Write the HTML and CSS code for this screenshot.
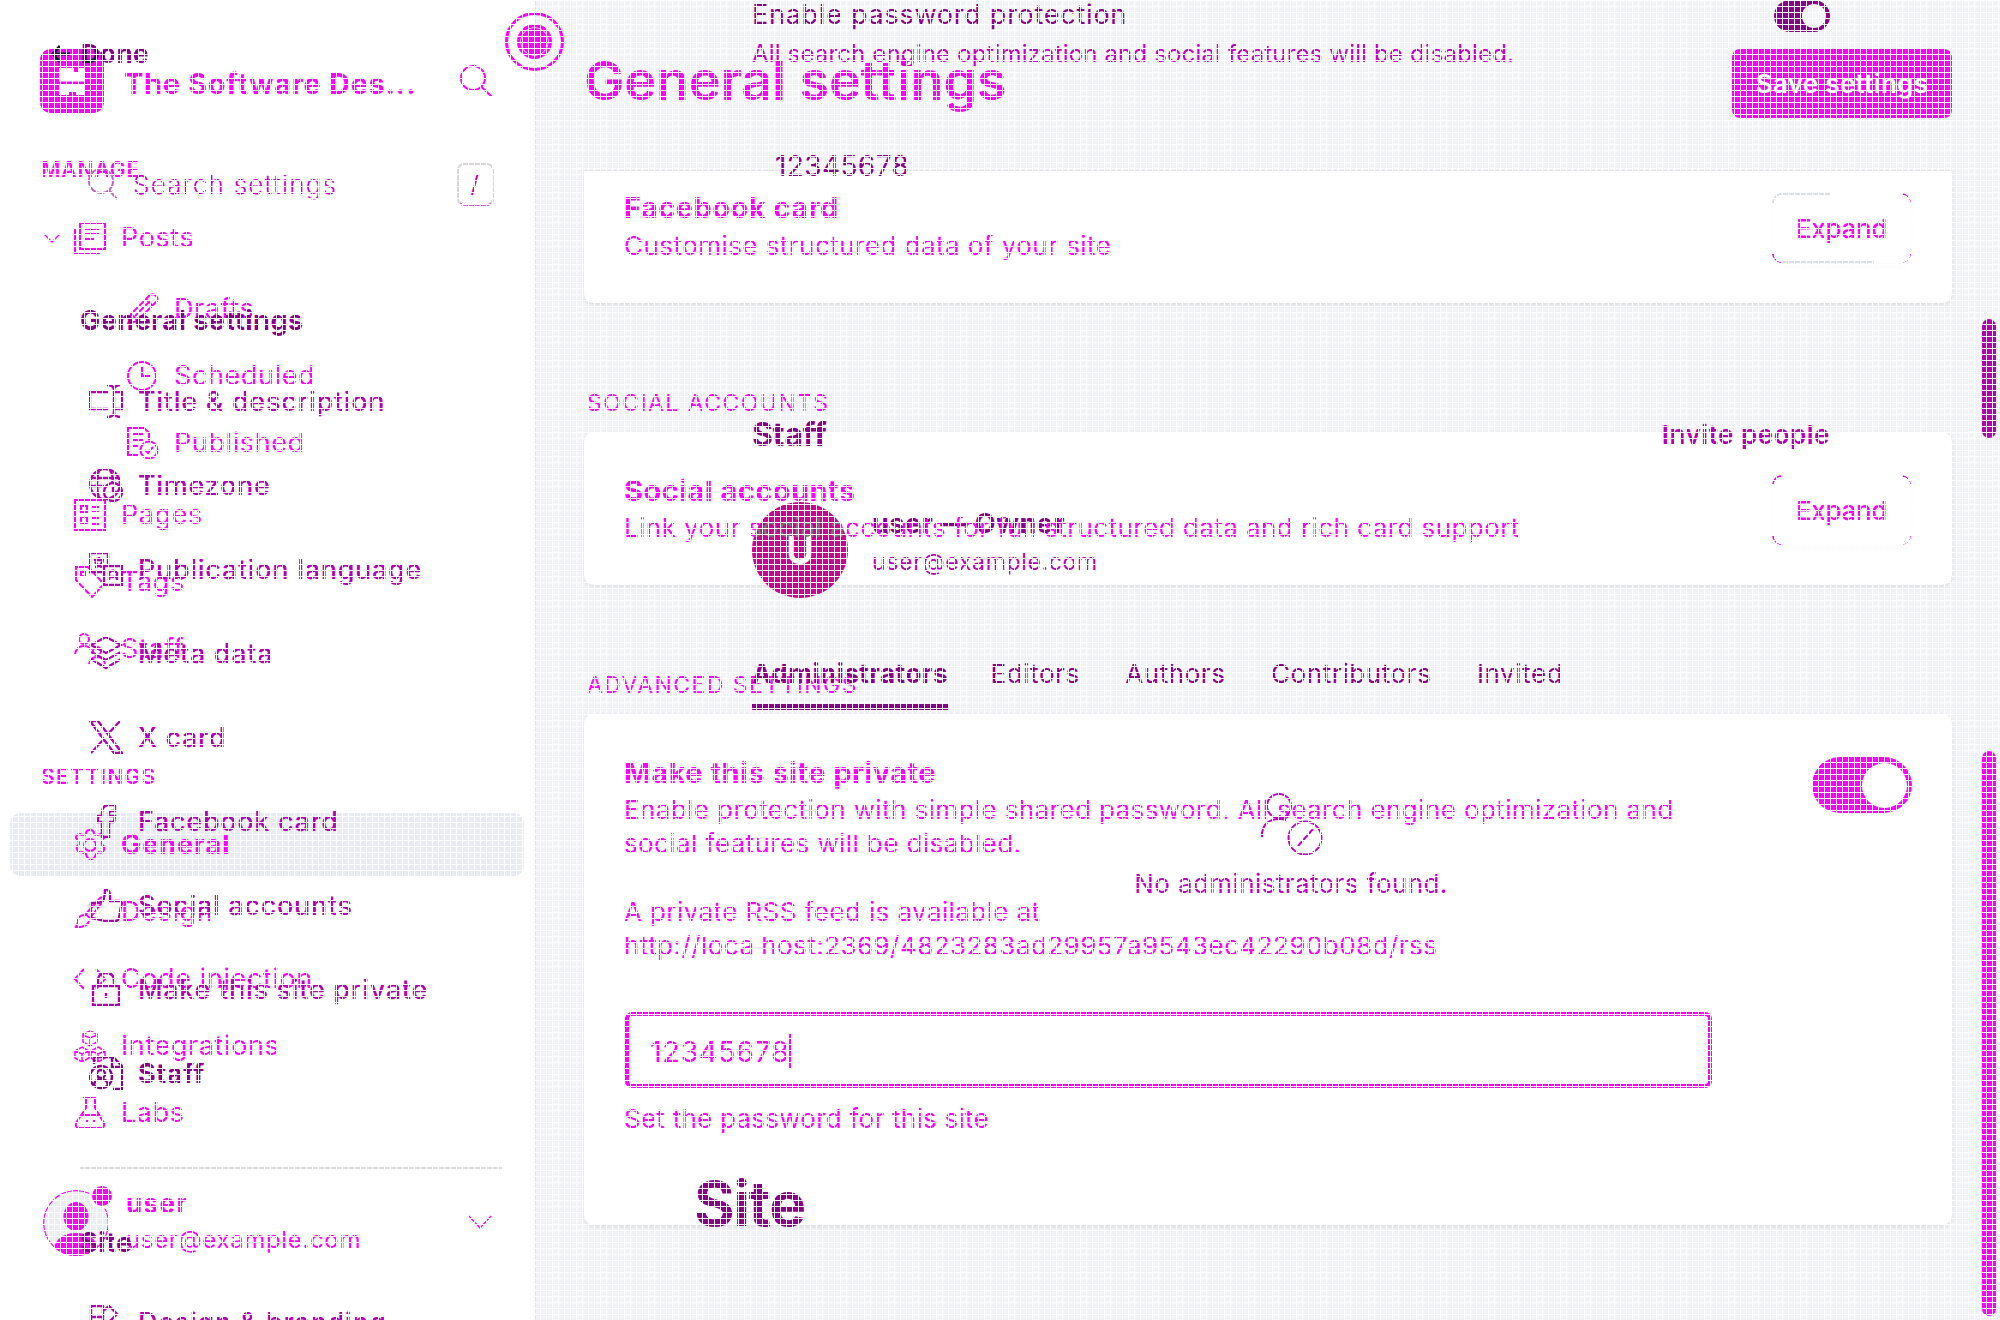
FILE: index.html
```
<!DOCTYPE html>
<html lang="en">
<head>
<meta charset="utf-8">
<title>General settings</title>
<link rel="stylesheet" href="styles.css">
</head>
<body>
<div class="admin">
  <aside class="side">
    <header class="brand">
      <svg class="logo" viewBox="0 0 64 64"><rect width="64" height="64" rx="11" fill="#f0f"/><path d="M19 19h15v4h5v-4h6v13.500H19zM19 36h26v10h-9v-3h-7v3H19z" fill="#fff"/></svg>
      <span class="brand-name">The Software Des...</span>
      <svg class="search" viewBox="0 0 32 32"><circle cx="13" cy="13" r="12"/><path d="M21.500 22l10 9.500"/></svg>
    </header>
    <h2 class="group">MANAGE</h2>
    <nav class="menu">
      <a class="row posts"><svg class="chev" viewBox="0 0 18 10"><path d="M1 1l8 8 8-8"/></svg><svg class="ic" viewBox="0 0 32 32"><path d="M6 1h25v26H6zM1 6v25h25M11 7h14M11 12h14M11 17h9"/></svg><span>Posts</span></a>
      <a class="row sub first"><svg class="ic" viewBox="0 0 32 32"><path d="M1 31l3-10L23 2q3-2 6 1t0 6L10 28zM4 21l7 7M19 6l7 7M8 23L24 7"/></svg><span>Drafts</span></a>
      <a class="row sub"><svg class="ic" viewBox="0 0 32 32"><circle cx="15" cy="16" r="14"/><path d="M15 6v10h8"/></svg><span>Scheduled</span></a>
      <a class="row sub"><svg class="ic" viewBox="0 0 32 32"><path d="M11 28H1V1h16l5 5v7M5 7h11M5 13h11M5 19h6"/><circle cx="22" cy="23" r="8.500"/><path d="M18 23l3 3 5-6"/></svg><span>Published</span></a>
      <a class="row pages"><svg class="ic" viewBox="0 0 32 32"><path d="M1 1h30v30H1zM7 7h6v6H7zM7 18h6v6H7zM18 8h7M18 12h7M18 19h7M18 25h7"/></svg><span>Pages</span></a>
      <a class="row"><svg class="ic" viewBox="0 0 32 32"><path d="M2 1h12l16 17-12 13L2 14zM7 6h4v4H7z"/></svg><span>Tags</span></a>
      <a class="row"><svg class="ic" viewBox="0 0 32 32"><circle cx="10" cy="6" r="5"/><path d="M1 22q1-9 9-9 5 0 7 4"/><circle cx="23" cy="18" r="4"/><path d="M15 31q1-7 8-7t8 7"/></svg><span>Staff</span></a>
    </nav>
    <h2 class="group settings">SETTINGS</h2>
    <nav class="menu second">
      <a class="row active"><svg class="ic" viewBox="0 0 32 32"><circle cx="16" cy="16" r="6"/><path d="M12 5q0-4 4-4t4 4q3 2 6 0 3 0 4 4-3 3-2 7 3 1 2 5-2 4-5 2l-3 2q-1 5-5 5t-5-5l-4-2q-4 1-5-3-1-3 2-5 0-4-3-6 0-4 4-4 3 2 6 0z"/></svg><span>General</span></a>
      <a class="row"><svg class="ic" viewBox="0 0 32 32"><path d="M11 19L26 2q4-2 4 2L16 22M11 19q3 0 5 4M11 19q-6 0-7 5 0 6-3 7 12 1 14-6"/></svg><span>Design</span></a>
      <a class="row"><svg class="ic" viewBox="0 0 32 32"><path d="M10 6L1 16l9 10M22 6l9 10-9 10"/></svg><span>Code injection</span></a>
      <a class="row"><svg class="ic thin" viewBox="0 0 32 32"><path d="M16 1l7 3v8l-7 4-7-4V4zM9 5l7 3 7-3M16 8v8M8 17l7 4v7l-7 4-7-4v-7zM1 21l7 3 7-3M8 24v7M24 17l7 4v7l-7 4-7-4v-7zM17 21l7 3 7-3M24 24v7"/></svg><span>Integrations</span></a>
      <a class="row"><svg class="ic" viewBox="0 0 32 32"><path d="M9 1h14M12 1v10L2 26q-1 5 3 5h22q4 0 3-5L21 11V1M7 18h18M12 24h2M20 23v3"/></svg><span>Labs</span></a>
    </nav>
    <footer class="account">
      <svg class="face" viewBox="0 0 70 70"><defs><clipPath id="disc"><circle cx="33" cy="37" r="33"/></clipPath></defs><g clip-path="url(#disc)"><circle cx="33" cy="37" r="32.500" fill="#e9eff3" stroke="#f0f" stroke-width="1.500"/><ellipse cx="33" cy="30.500" rx="12.500" ry="14.500" fill="#f0f"/><path d="M9 74q0-27 24-27t24 27z" fill="#f0f"/></g><circle cx="59" cy="10" r="13" fill="#fff"/><circle cx="59" cy="10" r="10" fill="#f0f"/></svg>
      <div class="who"><b>user</b><span>user@example.com</span></div>
      <svg class="chev down" viewBox="0 0 24 15"><path d="M1 1l11 12L23 1"/></svg>
    </footer>
  </aside>

  <main class="page">
    <header class="head"><h1>General settings</h1><button class="save">Save settings</button></header>
    <section class="card c1">
      <div class="copy"><h3>Facebook card</h3><p>Customise structured data of your site</p></div>
      <button class="expand partial">Expand</button>
    </section>
    <h2 class="label">SOCIAL ACCOUNTS</h2>
    <section class="card c2">
      <div class="copy"><h3>Social accounts</h3><p class="link">Link your social accounts for full structured data and rich card support</p></div>
      <button class="expand">Expand</button>
    </section>
    <h2 class="label adv">ADVANCED SETTINGS</h2>
    <section class="card c3">
      <div class="copy"><h3>Make this site private</h3>
        <p class="long">Enable protection with simple shared password. All search engine optimization and<br>social features will be disabled.<br><br>A private RSS feed is available at<br><span class="url">http://loca<i>l</i>host:2369/4823283ad29957a9543ec42290b08d/rss</span></p>
        <div class="field"><span>12345678</span><i class="caret"></i></div>
        <p class="hint">Set the password for this site</p>
      </div>
      <div class="switch big"><i></i></div>
    </section>
  </main>
</div>

<div class="layer">
  <aside class="side2">
    <div class="done"><svg viewBox="0 0 20 18"><path d="M19 9H2M9 1L2 9l7 8"/></svg><span>Done</span></div>
    <div class="find"><svg viewBox="0 0 32 32"><circle cx="13" cy="13" r="12"/><path d="M21 22l8 9"/></svg><span>Search settings</span><kbd>/</kbd></div>
    <h4>General settings</h4>
    <nav class="list">
      <a><svg viewBox="0 0 34 34"><path d="M20 8H1v17h19M26 8h7v17h-7M18 1q7 0 7 5v22q0 5-7 5M32 1q-7 0-7 5v22q0 5 7 5"/></svg>Title &amp; description</a>
      <a><svg viewBox="0 0 34 34"><circle cx="16" cy="16" r="15"/><path d="M2 10h28M1 18h14M10 2q-4 14 0 28M21 2q4 7 2 12"/><circle cx="24" cy="24" r="9"/><path d="M24 19v5h4"/></svg>Timezone</a>
      <a><svg viewBox="0 0 34 34"><path d="M15 20H1V1h18v13M15 14h18v19H15zM5 8h10M10 5v3M6 15q7-1 8-7M6 10q3 4 7 5M20 28v-7q4-5 8 0v7M20 25h8"/></svg>Publication language</a>
      <a><svg viewBox="0 0 34 34"><path d="M17 1l15 8-15 8L2 9zM2 16l15 8 15-8M2 23l15 9 15-9"/></svg>Meta data</a>
      <a><svg viewBox="0 0 34 34"><path d="M1 1h8l24 32h-8zM31 1L19 14M14 20L2 33"/></svg>X card</a>
      <a><svg viewBox="0 0 34 34"><path d="M26 1h-6q-7 0-7 8v3H9v6h4v15h7V18h5l1-6h-6V9q0-2 3-2h3z"/></svg>Facebook card</a>
      <a><svg viewBox="0 0 34 34"><path d="M14 12q2-3 2-11 6 0 5 12h10q3 1 1 5l-2 12q-1 3-4 3H15q-5-2-13-3V15h8z"/></svg>Social accounts</a>
      <a><svg viewBox="0 0 34 34"><path d="M4 14h26v19H4zM9 14V9q0-8 8-8t8 8v5M17 21v5"/></svg>Make this site private</a>
      <a class="on"><svg viewBox="0 0 34 34"><path d="M5 8V1h19l9 9v23h-9M23 1v10h10"/><circle cx="12" cy="21" r="11"/><circle cx="12" cy="18" r="4"/><path d="M5 29q1-6 7-6t7 6"/></svg>Staff</a>
    </nav>
    <hr>
    <h4 class="site">Site</h4>
    <nav class="list tail"><a><svg viewBox="0 0 34 34"><path d="M2 1h12v32H2zM14 6l6-5 8 8-13 13M2 12h12M20 16l12 5v12H14"/></svg>Design &amp; branding</a></nav>
  </aside>
  <div class="page2">
    <div class="protect"><div><p class="a">Enable password protection</p><p class="b">All search engine optimization and social features will be disabled.</p></div><div class="switch small"><i></i></div></div>
    <p class="pass">12345678</p>
    <div class="staff-head"><h3>Staff</h3><a>Invite people</a></div>
    <div class="owner"><span class="av">U</span><div><b>user — Owner</b><span>user@example.com</span></div></div>
    <nav class="tabs"><a class="sel">Administrators</a><a>Editors</a><a>Authors</a><a>Contributors</a><a>Invited</a></nav>
    <div class="none"><svg viewBox="0 0 62 62"><circle cx="18" cy="13" r="12"/><path d="M1 44V40Q3 26 18 26q4 0 7 1"/><circle cx="44" cy="45" r="16.500"/><path d="M37 53l15-17"/></svg><p>No administrators found.</p></div>
    <h2 class="big-site">Site</h2>
  </div>
</div>

<div class="target"><i></i></div>
<i class="bar one"></i><i class="bar two"></i>
<div class="mesh"></div>
</body>
</html>
```
FILE: styles.css
```
* { box-sizing: border-box; margin: 0; padding: 0; }
html, body { width: 2000px; height: 1320px; overflow: hidden; }
body { position: relative; background: #fff; font-family: Inter, "Liberation Sans", sans-serif; font-size: 26px; color: #f0f; }
svg { fill: none; stroke: currentColor; stroke-width: 2; flex: none; display: block; }
.logo, .face { stroke: none; }
i { font-style: normal; }
button { font: inherit; color: inherit; border: 0; background: none; }

.admin { display: flex; height: 1320px; }
.side { width: 535px; background: #fff; flex: none; }
.brand { display: flex; align-items: center; height: 64px; margin: 49px 43px 0 40px; }
.logo { width: 64px; height: 64px; }
.brand-name { flex: 1; margin: 4px 0 0 20px; font-size: 29px; font-weight: 700; letter-spacing: .65px; white-space: nowrap; }
.search { width: 32px; height: 32px; }
.group { height: 20px; line-height: 20px; margin: 47px 0 0 41px; font-size: 21px; font-weight: 600; letter-spacing: .95px; }
.menu { margin-top: 26px; }
.row { display: flex; align-items: center; height: 63px; margin: 0 11px 4px 10px; padding-left: 64px; border-radius: 10px; font-size: 27px; letter-spacing: .6px; }
.row .ic { width: 32px; height: 32px; margin-right: 15px; }
.row .thin { stroke-width: 1.500; }
.posts { padding-left: 33px; }
.chev { width: 18px; height: 10px; margin-right: 13px; stroke-width: 1.400; }
.sub { padding-left: 117px; }
.sub.first { margin-top: 8px; }
.pages { margin-top: 9px; }
.group.settings { margin-top: 87px; letter-spacing: 1.27px; }
.menu.second { margin-top: 26px; }
.active { background: #e9ebf2; font-weight: 700; letter-spacing: .95px; }
.account { display: flex; height: 70px; margin: 42px 43px 0 43px; }
.face { width: 70px; height: 70px; }
.who { display: flex; flex-direction: column; flex: 1; margin-left: 13px; }
.who b { line-height: 36px; font-weight: 700; letter-spacing: 1.400px; }
.who span { line-height: 36px; font-size: 24px; letter-spacing: .65px; }
.chev.down { width: 24px; height: 15px; margin: 29px 0 0; }

.page { flex: 1; background: #f2f3f7; border-left: 1px solid #e3e5ea; padding: 49px 48px 0 48px; }
.head { display: flex; justify-content: space-between; height: 69px; }
h1 { font-size: 54px; line-height: 64px; font-weight: 600; letter-spacing: -.2px; }
.save { width: 220px; height: 69px; border-radius: 8px; background: #f0f; color: #fff; font-weight: 600; letter-spacing: .31px; }
.card { display: flex; justify-content: space-between; padding: 40px 41px 0 40px; background: #fff; border-radius: 10px; box-shadow: 0 2px 5px rgba(0,0,0,.09); }
.card h3 { font-size: 29px; line-height: 38px; font-weight: 700; letter-spacing: .45px; }
.card p { line-height: 38px; letter-spacing: .45px; white-space: nowrap; }
.c1 { height: 133px; margin-top: 52px; padding-top: 18px; border-radius: 0 0 10px 10px; border-top: 1px solid #e4e6ea; }
.c2 { height: 153px; margin-top: 17px; }
.c3 { height: 511px; margin-top: 17px; }
.label { height: 24px; margin: 88px 0 0 3px; font-size: 23px; line-height: 24px; font-weight: 400; letter-spacing: 1.43px; }
.card .link { position: relative; z-index: 3; margin-top: -1px; color: transparent; letter-spacing: .43px; background: radial-gradient(circle at 176px 41px, #777 47px, #f0f 48px); background-clip: text; -webkit-background-clip: text; }
.expand { width: 139px; height: 70px; margin-top: 3px; border-radius: 10px; font-weight: 500; letter-spacing: -.3px; box-shadow: 0 4px 6px rgba(0,0,0,.02);
  background: radial-gradient(circle at 10px 10px, transparent 8px, #f0f 8.500px 10px, transparent 10.500px) 0 0/9px 9px no-repeat,
    radial-gradient(circle at 0 10px, transparent 8px, #f0f 8.500px 10px, transparent 10.500px) 100% 0/9px 9px no-repeat,
    radial-gradient(circle at 10px 0, transparent 8px, #f0f 8.500px 10px, transparent 10.500px) 0 100%/9px 9px no-repeat,
    radial-gradient(circle at 0 0, transparent 8px, #f0f 8.500px 10px, transparent 10.500px) 100% 100%/9px 9px no-repeat; }
.expand.partial { margin-top: 4px; background:
    linear-gradient(#d8dfe4, #d8dfe4) 10px 0/48px 2px no-repeat,
    linear-gradient(#d8dfe4, #d8dfe4) 10px 100%/92px 2px no-repeat,
    radial-gradient(circle at 10px 10px, transparent 8px, #d8dfe4 8.500px 10px, transparent 10.500px) 0 0/10px 10px no-repeat,
    radial-gradient(circle at 0 10px, transparent 8px, #f0f 8.500px 10px, transparent 10.500px) 100% 0/9px 9px no-repeat,
    radial-gradient(circle at 10px 0, transparent 8px, #f0f 8.500px 10px, transparent 10.500px) 0 100%/9px 9px no-repeat,
    radial-gradient(circle at 0 0, transparent 8px, #f0f 8.500px 10px, transparent 10.500px) 100% 100%/9px 9px no-repeat; }
.card .long { margin-top: 1px; line-height: 34px; letter-spacing: .4px; }
.url { letter-spacing: .45px; }
.url i { color: transparent; }
.field { display: flex; align-items: center; width: 1087px; height: 76px; margin: 49px 0 0 1px; padding: 2px 0 0 21px; border: 4px solid #f0f; border-radius: 7px; font-size: 29px; letter-spacing: .47px; }
.caret { width: 2px; height: 35px; background: #f0f; }
.card .hint { margin-top: 12px; letter-spacing: .25px; }
.switch { background: #f0f; flex: none; display: flex; justify-content: flex-end; align-items: center; }
.switch i { background: #fff; border-radius: 50%; }
.big { width: 100px; height: 56px; border-radius: 28px; margin: 3px -1px 0 0; padding-right: 5px; }
.big i { width: 45px; height: 45px; }

.layer { position: absolute; inset: 0; display: flex; color: #b400b4; }
.side2 { width: 535px; flex: none; }
.done { display: flex; align-items: center; height: 26px; margin: 41px 0 0 51px; font-weight: 700; line-height: 26px; letter-spacing: .33px; color: #1a1a2e; }
.done svg { width: 20px; height: 18px; margin-right: 9px; stroke-width: 3; }
.done span { margin-left: 1px; color: transparent; background: linear-gradient(#1a1a2e, #1a1a2e) 0 8px/23px 100% no-repeat, #8b008b; background-clip: text; -webkit-background-clip: text; }
.find { display: flex; align-items: center; height: 44px; margin: 95px 41px 0 88px; color: #cc00cc; letter-spacing: 1.22px; }
.find svg { width: 32px; height: 32px; margin: 0 13px 1px 0; stroke: #c060c8; }
.find span { flex: 1; font-weight: 350; }
kbd { font: 24px/38px Inter, sans-serif; text-align: center; width: 37px; height: 43px; border: 2px solid #d8d4d8; border-bottom-color: #e060e0; border-radius: 7px; color: #b400b4; }
.side2 h4 { height: 30px; line-height: 30px; margin: 100px 0 0 80px; font-size: 27px; font-weight: 700; letter-spacing: .5px; color: #8b008b; }
.list { margin-top: 23px; }
.list a { display: flex; align-items: center; height: 84px; padding-left: 89px; font-size: 27px; font-weight: 500; letter-spacing: .7px; }
.list svg { width: 34px; height: 34px; margin-right: 15px; stroke-width: 2.400; }
.list .on { font-weight: 700; letter-spacing: .6px; color: #8b008b; }
hr { height: 2px; border: 0; background: #dedede; margin: 52px 33px 0 80px; }
.side2 .site { margin-top: 59px; }
.list.tail { margin-top: 22px; }

.page2 { flex: 1; padding: 0 170px 0 217px; color: #8b008b; }
.protect { display: flex; justify-content: space-between; height: 70px; }
.a { padding-top: 1px; font-size: 27px; line-height: 28px; letter-spacing: .75px; }
.b { margin-top: 10px; font-size: 24px; line-height: 30px; letter-spacing: .16px; color: #c400c4; }
.small { width: 56px; height: 32px; border-radius: 16px; background: #8b008b; padding-right: 4px; }
.small i { width: 24px; height: 24px; background: #f4f6f8; }
.pass { margin: 81px 0 0 23px; font-size: 28px; line-height: 30px; letter-spacing: .4px; }
.staff-head { display: flex; justify-content: space-between; height: 40px; line-height: 40px; margin-top: 234px; }
.staff-head h3 { font-size: 32px; letter-spacing: -.2px; }
.staff-head a { font-weight: 600; letter-spacing: .52px; color: #b400b4; }
.owner { display: flex; margin-top: 47px; height: 96px; }
.av { width: 96px; height: 96px; border-radius: 50%; background: #cf0094; color: #fff; font-size: 38px; font-weight: 600; line-height: 96px; text-align: center; margin-right: 24px; }
.owner div { display: flex; flex-direction: column; padding-top: 3px; line-height: 38px; }
.owner b { font-size: 27px; font-weight: 700; letter-spacing: .55px; }
.owner div span { font-size: 23px; letter-spacing: .66px; color: #b800b8; }
.tabs { display: flex; gap: 45.500px; margin-top: 46px; height: 66px; line-height: 60px; letter-spacing: .57px; }
.sel { width: 196px; margin-right: -3px; font-weight: 700; letter-spacing: .5px; border-bottom: 6px solid #8b008b; white-space: nowrap; }
.none { display: flex; flex-direction: column; align-items: center; margin-top: 83px; color: #c000c8; }
.none svg { width: 62px; height: 62px; margin-left: 2px; }
.none p { margin-top: 11px; line-height: 36px; letter-spacing: .41px; }
.big-site { margin: 272px 0 0 -58px; font-size: 62px; line-height: 60px; font-weight: 700; letter-spacing: -1.4px; }

.target { position: absolute; left: 505px; top: 12px; width: 59px; height: 59px; border: 3px solid #f0f; border-radius: 50%; display: flex; align-items: center; justify-content: center; }
.target i { width: 35px; height: 35px; border-radius: 50%; background: radial-gradient(circle, #f0f 13px, #f9f 13.500px 14px, #f0f 14.500px); }
.bar { position: absolute; left: 1982px; width: 14px; border-radius: 7px; background: #f0f; }
.one { top: 319px; height: 119px; background: #b400b4; }
.two { top: 751px; height: 565px; }
.mesh { position: absolute; inset: 0; z-index: 10; pointer-events: none; background: repeating-linear-gradient(90deg, #fff 0 1px, transparent 1px 6px), repeating-linear-gradient(#fff 0 1px, transparent 1px 6px); }
```
